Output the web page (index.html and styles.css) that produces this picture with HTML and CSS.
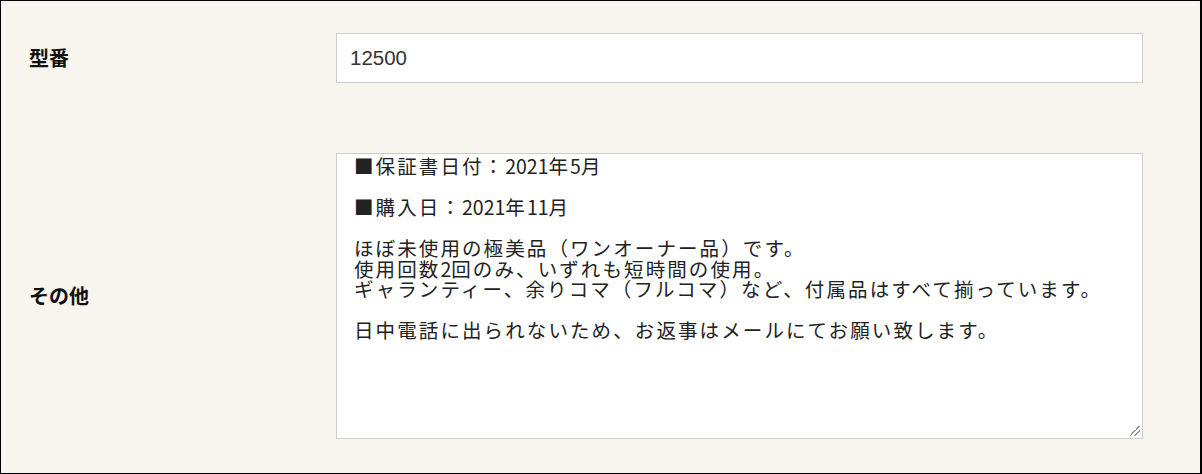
FILE: index.html
```html
<!DOCTYPE html>
<html lang="ja">
<head>
<meta charset="utf-8">
<title>フォーム</title>
<link rel="stylesheet" href="styles.css">
</head>
<body>
<div class="frame">
  <div class="panel">
    <div class="label">型番</div>
    <div class="field"><div class="input">12500</div></div>
    <div class="label">その他</div>
    <div class="field">
      <div class="textarea">
        <div class="line">■保証書日付：<span class="num">2021</span>年<span class="num">5</span>月</div>
        <div class="line blank"></div>
        <div class="line">■購入日：<span class="num">2021</span>年<span class="num">11</span>月</div>
        <div class="line blank"></div>
        <div class="line">ほぼ未使用の極美品（ワンオーナー品）です。</div>
        <div class="line">使用回数<span class="num">2</span>回のみ、いずれも短時間の使用。</div>
        <div class="line">ギャランティー、余りコマ（フルコマ）など、付属品はすべて揃っています。</div>
        <div class="line blank"></div>
        <div class="line">日中電話に出られないため、お返事はメールにてお願い致します。</div>
        <span class="grip"></span>
      </div>
    </div>
  </div>
</div>
</body>
</html>
```

FILE: styles.css
```css
* { box-sizing: border-box; }
html, body { margin: 0; padding: 0; background: #f8f5ee; }
.frame {
  width: 1202px;
  height: 474px;
  border: 1px solid #000;
  border-right-width: 2px;
  padding: 3px;
  background: #f8f5ee;
}
.panel {
  height: 100%;
  border-top: 1px solid #fdfcf9;
  border-left: 1px solid #fdfcf9;
  padding: 28px 0 0 24px;
  display: grid;
  grid-template-columns: 307px 807px;
  grid-template-rows: 50px 286px;
  row-gap: 70px;
  align-items: center;
  font-family: "Noto Sans CJK JP", sans-serif;
  color: #111;
}
.label {
  font-size: 20px;
  font-weight: bold;
  font-family: "Noto Sans CJK JP", sans-serif;
  line-height: 24px;
}
.field { height: 100%; }
.input {
  height: 50px;
  background: #fff;
  border: 1px solid #cccccc;
  padding: 0 13px;
  display: flex;
  align-items: center;
  font-family: "Liberation Sans", Arial, sans-serif;
  font-size: 20.5px;
  color: #333;
}
.textarea {
  position: relative;
  height: 286px;
  background: #fff;
  border: 1px solid #cccccc;
  padding: 2px 17px;
  font-family: "Noto Sans CJK JP", sans-serif;
  font-size: 19.5px;
  letter-spacing: 2.1px;
  color: #222;
}
.line {
  height: 20.5px;
  line-height: 20.5px;
  white-space: nowrap;
}
.num {
  letter-spacing: 0;
}
.grip {
  position: absolute;
  right: 2px;
  bottom: 2px;
  width: 10px;
  height: 10px;
  background:
    linear-gradient(135deg, transparent 0 45%, #999 45% 52%, transparent 52% 70%, #999 70% 77%, transparent 77%);
}
```
